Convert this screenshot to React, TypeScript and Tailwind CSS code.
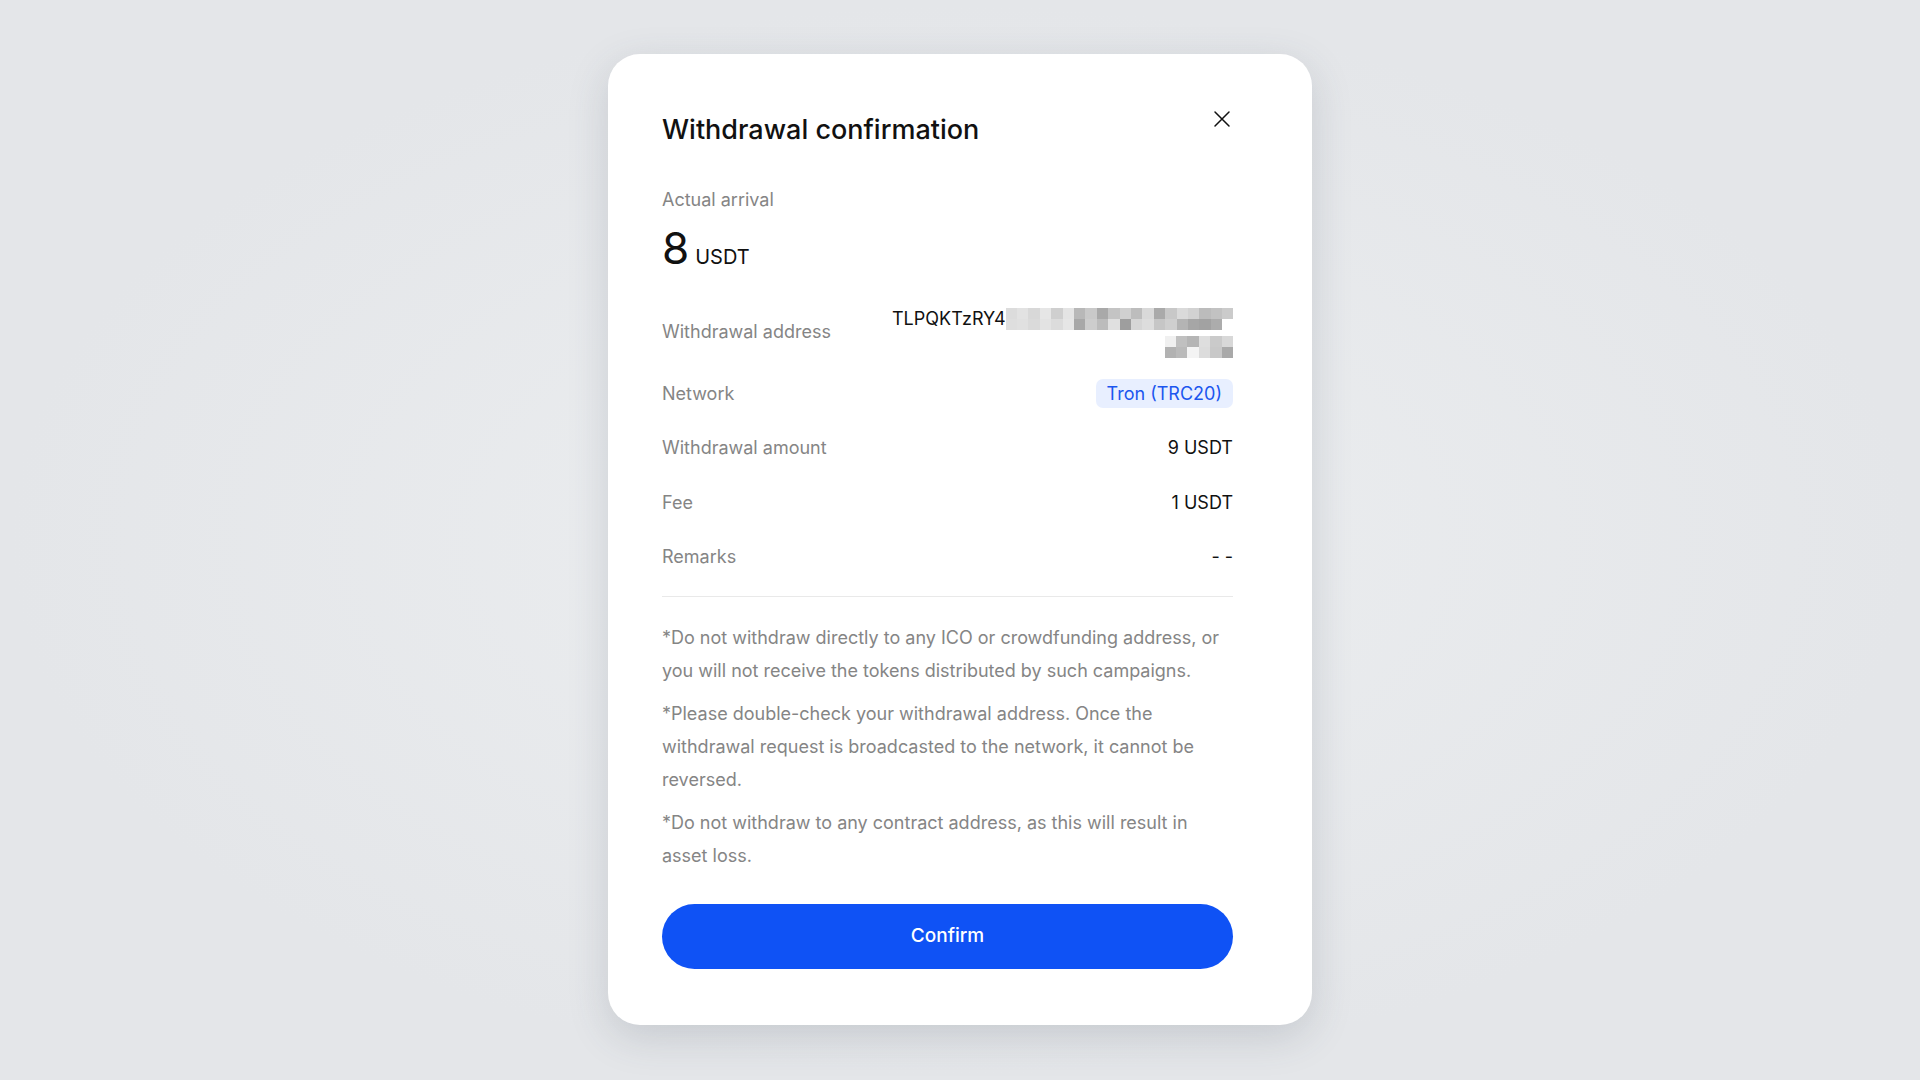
import React from "react";

const row1: string[] = [
  "bg-[#dcdcdc]", "bg-[#e2e2e2]", "bg-[#d8d8d8]", "bg-[#e6e6e6]", "bg-[#cfcfcf]", "bg-[#e4e4e4]", "bg-[#b8b8b8]", "bg-[#c9c9c9]", "bg-[#a9a9a9]", "bg-[#c4c4c4]", "bg-[#d0d0d0]", "bg-[#bdbdbd]", "bg-[#d9d9d9]", "bg-[#aaaaaa]", "bg-[#c8c8c8]", "bg-[#dadada]", "bg-[#d2d2d2]", "bg-[#bcbcbc]", "bg-[#c2c2c2]", "bg-[#cbcbcb]",
];
const row2: string[] = [
  "bg-[#dedede]", "bg-[#e0e0e0]", "bg-[#dadada]", "bg-[#e3e3e3]", "bg-[#dcdcdc]", "bg-[#e6e6e6]", "bg-[#a8a8a8]", "bg-[#cdcdcd]", "bg-[#bcbcbc]", "bg-[#e0e0e0]", "bg-[#9e9e9e]", "bg-[#d6d6d6]", "bg-[#dddddd]", "bg-[#c6c6c6]", "bg-[#cfcfcf]", "bg-[#b4b4b4]", "bg-[#a6a6a6]", "bg-[#a2a2a2]", "bg-[#acacac]", "bg-[#ffffff]",
];
const row3: string[] = ["bg-[#f0f0f0]", "bg-[#c0c0c0]", "bg-[#b5b5b5]", "bg-[#dedede]", "bg-[#cacaca]", "bg-[#d8d8d8]"];
const row4: string[] = ["bg-[#b2b2b2]", "bg-[#bababa]", "bg-[#f4f4f4]", "bg-[#dcdcdc]", "bg-[#c8c8c8]", "bg-[#a9a9a9]"];

function Blocks({ cells }: { cells: string[] }) {
  return (
    <div className="flex">
      {cells.map((c, i) => (
        <div key={i} className={`h-[11px] w-[11.4px] ${c}`} />
      ))}
    </div>
  );
}

function Row({ label, children }: { label: string; children: React.ReactNode }) {
  return (
    <div className="flex h-[54.5px] items-center justify-between">
      <span className="text-[18px] text-[#858585]">{label}</span>
      {children}
    </div>
  );
}

export default function App() {
  return (
    <div
      className="flex min-h-screen w-full items-start justify-center bg-[#e5e7ea] bg-[radial-gradient(ellipse_at_center,#eceef0_0%,#e4e6e9_70%)]"
      style={{ fontFamily: "Inter, 'Noto Sans', sans-serif" }}
    >
      <div className="mt-[54px] w-[704px] rounded-[32px] bg-white pb-[56px] pl-[54px] pr-[79px] pt-[56px] shadow-[0_12px_40px_rgba(60,70,90,0.18)]">
        <div className="flex items-start justify-between">
          <h1 className="mt-[2px] text-[27px] font-medium leading-[36px] text-[#111111]">Withdrawal confirmation</h1>
          <button className="mr-[2px] flex h-[18px] w-[18px] items-center justify-center text-[#111]">
            <svg width="18" height="18" viewBox="0 0 18 18" fill="none" stroke="currentColor" strokeWidth="1.5" strokeLinecap="round">
              <path d="M2 2 L16 16 M16 2 L2 16" />
            </svg>
          </button>
        </div>

        <div className="mt-[39px] text-[18px] leading-[26px] text-[#858585]">Actual arrival</div>
        <div className="mt-[7px] flex items-baseline leading-[56px] text-[#111111]">
          <span className="text-[44px]">8</span>
          <span className="ml-[6px] text-[20px]">USDT</span>
        </div>

        <div className="mt-[20px] flex items-center justify-between">
          <span className="text-[18px] text-[#858585]">Withdrawal address</span>
          <div className="flex w-[341px] flex-col items-end">
            <div className="flex w-full items-center">
              <span className="text-[18px] leading-[28px] text-[#111111]">TLPQKTzRY4</span>
              <div className="flex flex-col">
                <Blocks cells={row1} />
                <Blocks cells={row2} />
              </div>
            </div>
            <div className="mt-[3px] flex flex-col">
              <Blocks cells={row3} />
              <Blocks cells={row4} />
            </div>
          </div>
        </div>

        <div className="mt-[8px]">
          <Row label="Network">
            <span className="rounded-[7px] bg-[#e8efff] px-[11px] text-[18px] leading-[29px] text-[#1b56ef]">Tron (TRC20)</span>
          </Row>
          <Row label="Withdrawal amount">
            <span className="text-[18px] text-[#111111]">9 USDT</span>
          </Row>
          <Row label="Fee">
            <span className="text-[18px] text-[#111111]">1 USDT</span>
          </Row>
          <Row label="Remarks">
            <span className="text-[18px] text-[#111111]">- -</span>
          </Row>
        </div>

        <div className="mt-[12px] h-px bg-[#e9e9e9]" />

        <div className="mt-[24px] flex flex-col gap-[10px] text-[18px] leading-[33px] text-[#858585]">
          <p>*Do not withdraw directly to any ICO or crowdfunding address, or you will not receive the tokens distributed by such campaigns.</p>
          <p>*Please double-check your withdrawal address. Once the withdrawal request is broadcasted to the network, it cannot be reversed.</p>
          <p>*Do not withdraw to any contract address, as this will result in asset loss.</p>
        </div>

        <button className="mt-[32px] flex h-[65px] w-full items-center justify-center rounded-full bg-[#0f52f5] text-[19px] font-medium text-white">
          Confirm
        </button>
      </div>
    </div>
  );
}
